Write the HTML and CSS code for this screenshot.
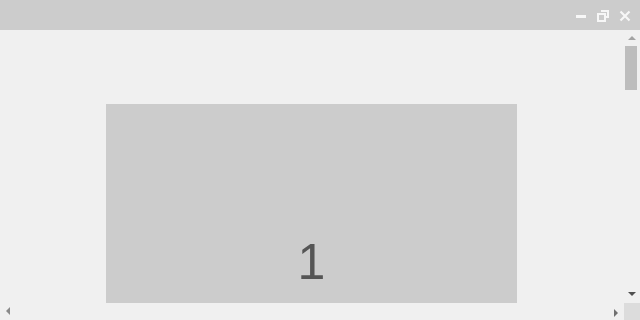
FILE: index.html
```html
<!DOCTYPE html>
<html>
<head>
<meta charset="utf-8">
<link rel="stylesheet" href="styles.css">
</head>
<body>
<div class="window">
  <div class="titlebar">
    <div class="controls">
      <svg class="ctl" width="12" height="12" viewBox="0 0 12 12"><rect x="1" y="5" width="10" height="3" fill="#f7f7f7"/></svg>
      <svg class="ctl" width="12" height="12" viewBox="0 0 12 12"><path d="M4 1h7v6h-2M1 4h7v7h-7z" fill="none" stroke="#f7f7f7" stroke-width="2"/></svg>
      <svg class="ctl" width="12" height="12" viewBox="0 0 12 12"><path d="M1.5 1.5l9 9M10.5 1.5l-9 9" stroke="#f7f7f7" stroke-width="2.2"/></svg>
    </div>
  </div>
  <div class="main">
    <div class="viewport">
      <div class="box"><span class="num">1</span></div>
    </div>
    <div class="vscroll">
      <div class="arrow up"></div>
      <div class="thumb"></div>
      <div class="track"></div>
      <div class="arrow down"></div>
    </div>
  </div>
  <div class="hbar">
    <div class="hscroll">
      <div class="arrow left"></div>
      <div class="arrow right"></div>
    </div>
    <div class="corner"></div>
  </div>
</div>
</body>
</html>
```
FILE: styles.css
```css
html, body {
  margin: 0;
  padding: 0;
}
body {
  width: 640px;
  height: 320px;
  overflow: hidden;
  background: #f0f0f0;
  font-family: "Liberation Sans", Arial, sans-serif;
}
.window {
  display: flex;
  flex-direction: column;
  width: 640px;
  height: 320px;
}
.titlebar {
  height: 30px;
  background: #cccccc;
  display: flex;
  justify-content: flex-end;
  align-items: center;
}
.controls {
  display: flex;
  gap: 10px;
  padding-right: 9px;
  padding-top: 1px;
}
.ctl {
  display: block;
}
.main {
  display: flex;
  height: 273px;
}
.viewport {
  flex: 1;
  overflow: hidden;
  padding: 74px 0 0 106px;
  box-sizing: border-box;
}
.box {
  width: 411px;
  height: 300px;
  background: #cccccc;
  text-align: center;
  padding-top: 133px;
  box-sizing: border-box;
}
.num {
  font-size: 50px;
  line-height: 50px;
  color: #555555;
}
.vscroll {
  width: 16px;
  display: flex;
  flex-direction: column;
  align-items: center;
  background: #f0f0f0;
}
.arrow {
  width: 0;
  height: 0;
}
.up {
  margin-top: 6px;
  margin-bottom: 6px;
  border-left: 4px solid transparent;
  border-right: 4px solid transparent;
  border-bottom: 4px solid #a3a3a3;
}
.thumb {
  width: 12px;
  height: 44px;
  margin-left: 1px;
  margin-right: 3px;
  align-self: flex-start;
  background: #bdbdbd;
}
.track {
  flex: 1;
}
.down {
  margin-bottom: 7px;
  border-left: 4px solid transparent;
  border-right: 4px solid transparent;
  border-top: 4px solid #505050;
}
.hbar {
  display: flex;
  height: 17px;
}
.hscroll {
  flex: 1;
  display: flex;
  justify-content: space-between;
  align-items: center;
  padding: 0 6px 0 6px;
  background: #f0f0f0;
}
.left {
  margin-top: -1px;
  border-top: 4px solid transparent;
  border-bottom: 4px solid transparent;
  border-right: 4px solid #8a8a8a;
}
.right {
  margin-top: 2px;
  border-top: 4px solid transparent;
  border-bottom: 4px solid transparent;
  border-left: 4px solid #707070;
}
.corner {
  width: 16px;
  background: #dcdcdc;
}
```
